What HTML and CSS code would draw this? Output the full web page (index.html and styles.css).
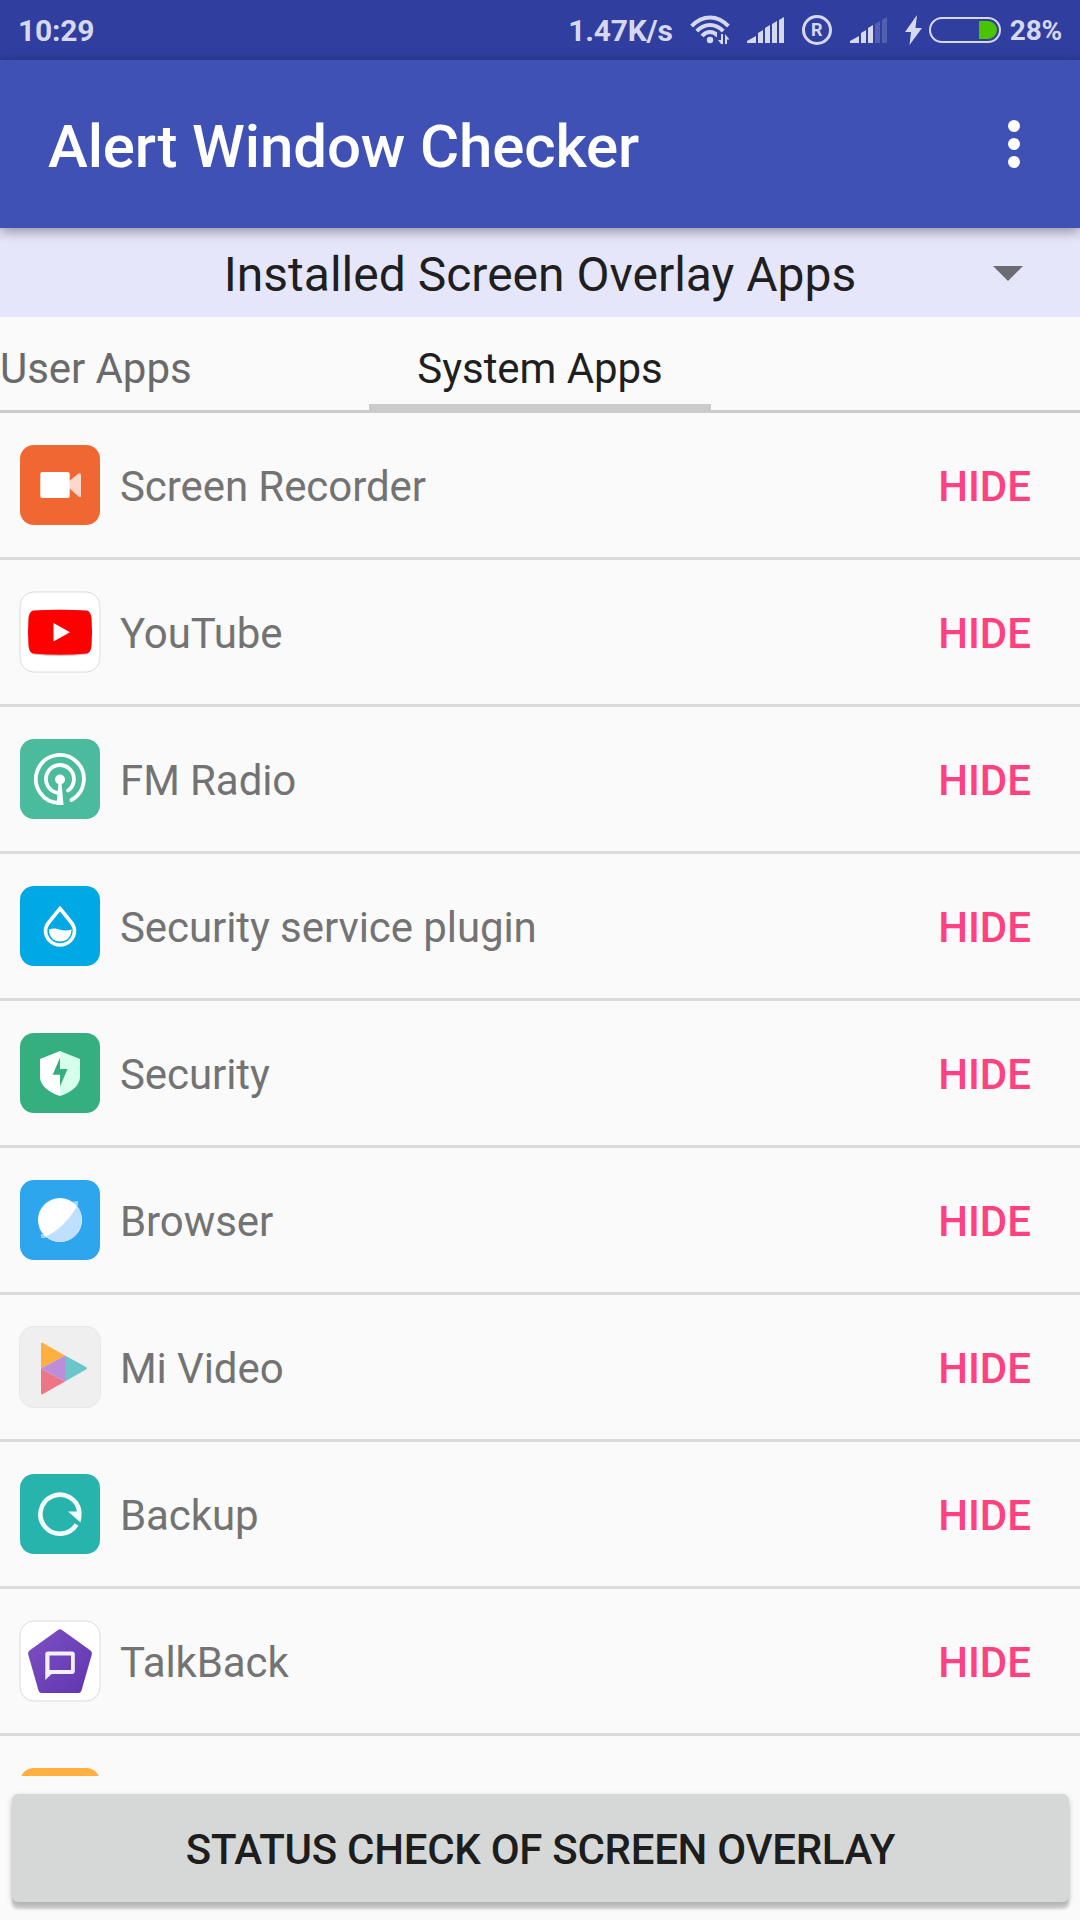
FILE: index.html
```
<!DOCTYPE html>
<html lang="en">

<head>
    <meta charset="UTF-8">
    <meta name="viewport" content="width=device-width, initial-scale=1.0">
    <title>Alert Window Checker</title>
    <link rel="stylesheet" href="styles.css">
</head>

<body>
    <div class="statusbar">
        <span class="time">10:29</span>
        <div class="status-icons">
            <span class="speed">1.47K/s</span>
            <svg class="wifi" width="40" height="30" viewBox="0 0 40 30">
                <g fill="none" stroke="#d6d9ee" stroke-width="4">
                    <path d="M1.6 11.2Q10 2.6 20 2.6T38.400 11.2"/>
                    <path d="M6.800 16.2Q12.500 10 20 10T33.200 16.2"/>
                    <path d="M12 21Q15.500 17 20 17T28 21"/>
                </g>
                <circle cx="20" cy="25" r="3.200" fill="#d6d9ee"/>
                <path d="M27 18H40V30H27Z" fill="#303e9f"/>
                <path d="M31 19H33V29H31L28 25H31ZM35 29V19L39.500 24.500H37V29Z" fill="#d6d9ee"/>
            </svg>
            <svg class="signal" width="37" height="26" viewBox="0 0 37 26" fill="#d6d9ee">
                <path d="M0 26V24L9 19V26ZM11 26V16L16 13V26ZM18 26V11L23 8V26ZM25 26V7L30 4V26ZM32 26V3L37 0V26Z"/>
            </svg>
            <span class="roaming">R</span>
            <svg class="signal2" width="37" height="26" viewBox="0 0 37 26" fill="#d6d9ee">
                <path d="M0 26V24L9 19V26ZM11 26V16L16 13V26ZM18 26V11L23 8V26Z"/>
                <path d="M25 26V7L30 4V26ZM32 26V3L37 0V26Z" fill="#535faf"/>
            </svg>
            <svg class="bolt" width="17" height="30" viewBox="0 0 17 30">
                <path d="M12 0L0 17H6L4.500 30L17 13H10.500Z" fill="#d6d9ee"/>
            </svg>
            <div class="battery"><div class="level"></div></div>
            <span class="percent">28%</span>
        </div>
    </div>

    <div class="toolbar">
        <h1>Alert Window Checker</h1>
        <div class="menu"><i></i><i></i><i></i></div>
    </div>

    <div class="spinner">
        <span>Installed Screen Overlay Apps</span>
        <div class="arrow"></div>
    </div>

    <div class="tabs">
        <div class="tab">User Apps</div>
        <div class="tab active">System Apps</div>
        <div class="tab"></div>
    </div>

    <div class="list">
        <div class="row">
            <svg class="icon" viewBox="0 0 80 80">
                <rect width="80" height="80" rx="14" fill="#f16731"/>
                <path d="M48 37L58.500 28.500Q61 27.500 61 30V51Q61 53 58.500 51.500L48 42Z" fill="#fcd8ca"/>
                <rect x="20.300" y="27" width="29.400" height="26" rx="2" fill="#fff"/>
            </svg>
            <span class="name">Screen Recorder</span>
            <span class="hide">HIDE</span>
        </div>
        <div class="row">
            <svg class="icon" viewBox="0 0 80 80">
                <rect width="80" height="80" rx="14" fill="#fff" stroke="#dcdcdc"/>
                <path d="M13 19Q40 16.500 67 19Q71 20 71.500 27Q72.500 40 71.500 53Q71 61 67 62.500Q40 65.500 13 62.500Q9 61 8.500 53Q7.500 40 8.500 27Q9 20 13 19Z" fill="#c9c9c9"/>
                <path d="M13 18.500Q40 17 67 18.500Q71 19.500 71.500 27Q72.500 40 71.500 53Q71 60.500 67 61.500Q40 64 13 61.500Q9 60.500 8.500 53Q7.500 40 8.500 27Q9 19.500 13 18.500Z" fill="#f00"/>
                <path d="M33.500 31L50 40.300L33.500 49.500Z" fill="#fff"/>
            </svg>
            <span class="name">YouTube</span>
            <span class="hide">HIDE</span>
        </div>
        <div class="row">
            <svg class="icon" viewBox="0 0 80 80">
                <rect width="80" height="80" rx="14" fill="#4abb9c"/>
                <g fill="none" stroke="#fff" stroke-width="3.800" stroke-linecap="round">
                    <path d="M40 64A24 24 0 1 1 51.500 61"/>
                    <path d="M38 53.900A14 14 0 1 1 48 51.500"/>
                </g>
                <path d="M38.500 44H41.500L43.500 66H36.500Z" fill="#fff"/>
                <circle cx="40" cy="40.500" r="5" fill="#fff"/>
            </svg>
            <span class="name">FM Radio</span>
            <span class="hide">HIDE</span>
        </div>
        <div class="row">
            <svg class="icon" viewBox="0 0 80 80">
                <rect width="80" height="80" rx="14" fill="#00a9e4"/>
                <path d="M40 22.500L50.500 35.500C53 38.500 54.500 41 54.500 44.500A14.500 14.500 0 0 1 25.500 44.500C25.500 41 27 38.500 29.500 35.500Z" fill="none" stroke="#fff" stroke-width="3.600"/>
                <path d="M29 43.500C33 42 36 42.500 40 43.800Q46 45.500 51.500 43.500C51.500 51 47 55.500 40 55.500C33.500 55.500 29 51 29 43.500Z" fill="#fff"/>
            </svg>
            <span class="name">Security service plugin</span>
            <span class="hide">HIDE</span>
        </div>
        <div class="row">
            <svg class="icon" viewBox="0 0 80 80">
                <rect width="80" height="80" rx="14" fill="#35ae80"/>
                <path d="M40 18L20 26V44C20 53 30 60 40 63Z" fill="#fff"/>
                <path d="M40 18L60 26V44C60 53 50 60 40 63Z" fill="#d6ffed"/>
                <path d="M40 24.500V36H47.500L40 53.500V41.700H32.700Z" fill="#35ae80"/>
            </svg>
            <span class="name">Security</span>
            <span class="hide">HIDE</span>
        </div>
        <div class="row">
            <svg class="icon" viewBox="0 0 80 80">
                <rect width="80" height="80" rx="14" fill="#2ea6ee"/>
                <path d="M53 21.500L58 21V25L54 31ZM21 54V58H25L29 55Z" fill="#9fd2f8"/>
                <circle cx="40" cy="40" r="22" fill="#fff"/>
                <path d="M57 26.200A22 22 0 0 1 26 57Q46 46 57 26.200Z" fill="#bfdfff"/>
            </svg>
            <span class="name">Browser</span>
            <span class="hide">HIDE</span>
        </div>
        <div class="row">
            <svg class="icon" viewBox="0 0 80 80">
                <rect x="-.5" y="-.5" width="81" height="81" rx="14" fill="#efefef" stroke="#e8e8e8"/>
                <path d="M21 17Q21 15 23 16L45 28.500L21 41.500Z" fill="#fbb040"/>
                <path d="M45 28.500L66 40Q68 41.200 66 42.400L45 54.500Z" fill="#6cc5ca"/>
                <path d="M21 41.500L45 54.500L23 67Q21 68 21 66Z" fill="#ec7587"/>
                <path d="M45 28.500V54.500L21 41.500Z" fill="#bd8dd9"/>
            </svg>
            <span class="name">Mi Video</span>
            <span class="hide">HIDE</span>
        </div>
        <div class="row">
            <svg class="icon" viewBox="0 0 80 80">
                <rect width="80" height="80" rx="14" fill="#27b4ac"/>
                <path d="M56.500 50.500A19.500 19.500 0 1 1 59.300 38" fill="none" stroke="#f4fbfb" stroke-width="4.600"/>
                <path d="M48 37.500H61.500Q62 43 60.500 48.500Z" fill="#f4fbfb"/>
            </svg>
            <span class="name">Backup</span>
            <span class="hide">HIDE</span>
        </div>
        <div class="row">
            <svg class="icon" viewBox="0 0 80 80">
                <defs>
                    <linearGradient id="violet" x1="0" y1="0" x2="1" y2="1">
                        <stop offset="0" stop-color="#7e51c2"/>
                        <stop offset="1" stop-color="#5f35b0"/>
                    </linearGradient>
                </defs>
                <rect width="80" height="80" rx="14" fill="#fff" stroke="#dcdcdc"/>
                <path d="M38 9Q40 7.500 42 9L70.500 29.500Q72.500 31 71.800 33.500L61.500 69.500Q60.700 72 58.500 72H21.500Q19.300 72 18.500 69.500L8.200 33.500Q7.500 31 9.500 29.500Z" fill="url(#violet)"/>
                <path d="M28 30.500H52Q54.800 30.500 54.800 33V50Q54.800 53 52 53H31.500L25.300 59V33Q25.300 30.500 28 30.500ZM29.500 34.500V49H51V34.500Z" fill="#f4f0fa" fill-rule="evenodd"/>
            </svg>
            <span class="name">TalkBack</span>
            <span class="hide">HIDE</span>
        </div>
        <div class="row">
            <svg class="icon" viewBox="0 0 80 80">
                <rect width="80" height="80" rx="14" fill="#ffb03f"/>
            </svg>
        </div>
    </div>

    <div class="footer">
        <button class="check">STATUS CHECK OF SCREEN OVERLAY</button>
    </div>
</body>

</html>
```
FILE: styles.css
```
body {
    font-family: Roboto, sans-serif;
    background: #fafafa;
    margin: 0;
    width: 1080px;
    height: 1920px;
    overflow: hidden;
    display: flex;
    flex-direction: column;
}

.statusbar {
    box-sizing: border-box;
    height: 60px;
    padding: 0 18px;
    background: #303e9f;
    color: #d6d9ee;
    display: flex;
    justify-content: space-between;
    align-items: center;
    font-size: 30px;
    font-weight: 700;
    letter-spacing: -0.2px;
    flex-shrink: 0;
}

.status-icons {
    display: flex;
    align-items: center;
}

.wifi {
    margin-left: 17px;
}

.signal {
    margin-left: 17px;
}

.roaming {
    box-sizing: border-box;
    width: 30px;
    height: 30px;
    margin-left: 18px;
    border: 3px solid #d6d9ee;
    border-radius: 50%;
    font-size: 18px;
    line-height: 24px;
    text-align: center;
}

.signal2 {
    margin-left: 18px;
}

.bolt {
    margin-left: 18px;
}

.battery {
    box-sizing: border-box;
    width: 72px;
    height: 26px;
    margin: 0 9px 0 7px;
    padding: 2px;
    border: 2px solid #d6d9ee;
    border-radius: 13px;
    display: flex;
    justify-content: flex-end;
}

.level {
    width: 18px;
    background: #4bc400;
    border-radius: 0 9px 9px 0;
}

.percent {
    font-size: 28px;
}

.toolbar {
    height: 168px;
    background: #3f51b5;
    box-shadow: 0 3px 12px rgba(0, 0, 0, 0.4);
    position: relative;
    z-index: 1;
    display: flex;
    align-items: center;
    justify-content: space-between;
    padding: 0 60px 0 48px;
    flex-shrink: 0;
}

.toolbar h1 {
    margin: 4px 0 0;
    font-size: 60px;
    font-weight: 500;
    letter-spacing: -0.12px;
    color: #fff;
}

.menu {
    display: flex;
    flex-direction: column;
    gap: 6px;
}

.menu i {
    width: 12px;
    height: 12px;
    border-radius: 50%;
    background: #fff;
}

.spinner {
    height: 89px;
    background: #e6e6fa;
    color: #1f1f21;
    font-size: 48px;
    display: grid;
    grid-template-columns: 1fr auto 1fr;
    align-items: center;
    flex-shrink: 0;
}

.spinner span {
    grid-column: 2;
    padding-top: 3px;
}

.arrow {
    justify-self: end;
    margin: 2px 57px 0 0;
    border: 15px solid transparent;
    border-top-color: #6b6b74;
    border-bottom: 0;
}

.tabs {
    box-sizing: border-box;
    height: 96px;
    border-bottom: 3px solid #cbcbcb;
    display: grid;
    grid-template-columns: 1fr 342px 1fr;
    font-size: 42px;
    color: #6a6a6a;
    flex-shrink: 0;
}

.tab {
    box-sizing: border-box;
    height: 93px;
    line-height: 103px;
    letter-spacing: -0.06px;
}

.tab.active {
    color: #1f1f1f;
    text-align: center;
    border-bottom: 6px solid #cbcbcb;
}

.list {
    height: 1363px;
    overflow: hidden;
    flex-shrink: 0;
}

.row {
    height: 144px;
    border-bottom: 3px solid #dbdbdb;
    padding: 0 49px 0 20px;
    display: flex;
    align-items: center;
    font-size: 42px;
}

.icon {
    width: 80px;
    height: 80px;
    margin-right: 20px;
    overflow: visible;
}

.name {
    flex: 1;
    color: #737373;
    padding-top: 3px;
    letter-spacing: -0.08px;
}

.hide {
    color: #ff4081;
    font-weight: 500;
    padding-top: 3px;
}

.footer {
    padding: 18px 12px;
}

.check {
    display: block;
    width: 1057px;
    height: 108px;
    padding: 3px 0 0;
    border: 0;
    border-radius: 6px;
    background: #d6d8d7;
    color: #1d1d1d;
    font-family: Roboto, sans-serif;
    font-size: 42px;
    font-weight: 500;
    letter-spacing: -0.29px;
    box-shadow: 0 7px 3px rgba(0, 0, 0, 0.18), 0 2px 6px rgba(0, 0, 0, 0.18);
}
```
